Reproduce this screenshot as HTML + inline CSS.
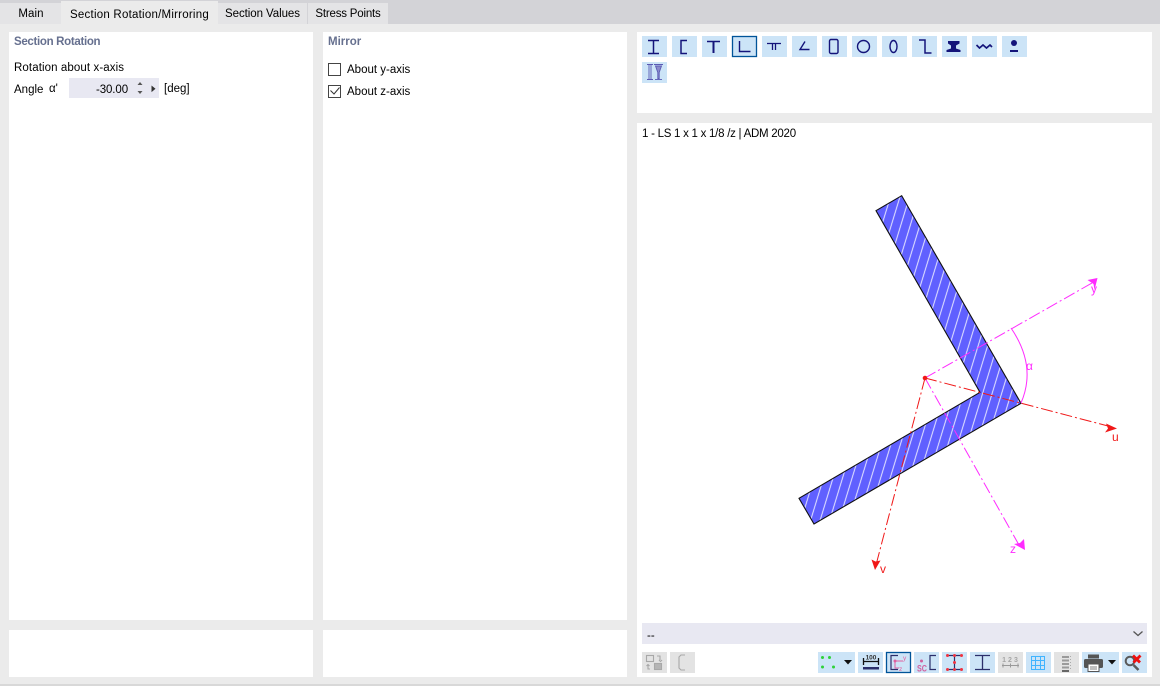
<!DOCTYPE html>
<html><head><meta charset="utf-8"><style>
html,body{margin:0;padding:0}
body{width:1160px;height:686px;background:#ebebeb;position:relative;overflow:hidden;font-family:"Liberation Sans",sans-serif;font-size:11.5px;color:#000}
.a{position:absolute}
.p{position:absolute;background:#fff}
.t{position:absolute;white-space:nowrap;line-height:14px}
.h{font-weight:bold;color:#66708f}
.tab{position:absolute;top:3px;height:21px;background:#e4e4e6;line-height:23px;text-align:center;white-space:nowrap}
svg{position:absolute;left:0;top:0}
</style></head><body>
<div class="a" style="left:0;top:0;width:1160px;height:24px;background:#d3d3d7"></div>
<div class="tab" style="left:0;width:62px;letter-spacing:.1px">Main</div>
<div class="tab" style="left:61px;top:1px;width:157px;height:23px;background:#ebebeb;line-height:28px;letter-spacing:.23px">Section Rotation/Mirroring</div>
<div class="tab" style="left:218px;width:89px;letter-spacing:-.07px">Section Values</div>
<div class="tab" style="left:308px;width:80px;letter-spacing:-.2px">Stress Points</div>

<div class="p" style="left:9px;top:32px;width:304px;height:588px"></div>
<div class="p" style="left:323px;top:32px;width:304px;height:588px"></div>
<div class="p" style="left:9px;top:630px;width:304px;height:47px"></div>
<div class="p" style="left:323px;top:630px;width:304px;height:47px"></div>
<div class="p" style="left:637px;top:32px;width:515px;height:81px"></div>
<div class="p" style="left:637px;top:123px;width:515px;height:554px"></div>
<div class="a" style="left:0;top:684px;width:1160px;height:2px;background:#d8d8d8"></div>

<div class="t h" style="left:14px;top:35px;letter-spacing:-.32px">Section Rotation</div>
<div class="t" style="left:14px;top:61px;letter-spacing:.1px">Rotation about x-axis</div>
<div class="t" style="left:14px;top:83px">Angle</div>
<div class="t" style="left:49px;top:82px">α'</div>
<div class="a" style="left:69px;top:78px;width:90px;height:20px;background:#e8e8f2"></div>
<div class="t" style="left:68px;top:83px;width:60px;text-align:right;letter-spacing:-.1px">-30.00</div>
<div class="t" style="left:164px;top:82px">[deg]</div>

<div class="t h" style="left:328px;top:35px">Mirror</div>
<div class="a" style="left:328px;top:63px;width:11px;height:11px;border:1px solid #444;background:#fff"></div>
<div class="t" style="left:347px;top:63px">About y-axis</div>
<div class="a" style="left:328px;top:85px;width:11px;height:11px;border:1px solid #444;background:#fff"></div>
<div class="t" style="left:347px;top:85px">About z-axis</div>

<div class="t" style="left:642px;top:127px;letter-spacing:-.26px">1 - LS 1 x 1 x 1/8 /z | ADM 2020</div>

<div class="a" style="left:642px;top:623px;width:505px;height:21px;background:#e8e8f2"></div>
<div class="t" style="left:647px;top:629px">--</div>

<svg width="1160" height="686" viewBox="0 0 1160 686" xmlns="http://www.w3.org/2000/svg">
<defs>
<pattern id="hatch" patternUnits="userSpaceOnUse" width="9.1" height="30" patternTransform="translate(894.65 198.67) rotate(17)">
<rect width="9.1" height="30" fill="#6060ff"/>
<line x1="4.55" y1="-1" x2="4.55" y2="31" stroke="#f4f4ff" stroke-width=".9"/>
</pattern>
</defs>
<!-- spinner -->
<path d="M137.500 85l2.500-3 2.500 3z M137.500 91l2.500 3 2.500-3z" fill="#555"/>
<path d="M151.500 85.500l4 3.300-4 3.300z" fill="#333"/>
<!-- checkbox tick -->
<path d="M330.500 90.500l3.500 3.500 5.500-6.500" fill="none" stroke="#333" stroke-width="1"/>
<!-- dropdown chevron -->
<path d="M1133.500 631.500l4.500 4 4.500-4" fill="none" stroke="#555" stroke-width="1.300"/>

<!-- top toolbar backgrounds -->
<g fill="#cce4f7">
<rect x="642" y="36" width="25" height="21"/><rect x="672" y="36" width="25" height="21"/><rect x="702" y="36" width="25" height="21"/>
<rect x="762" y="36" width="25" height="21"/><rect x="792" y="36" width="25" height="21"/><rect x="822" y="36" width="25" height="21"/>
<rect x="852" y="36" width="25" height="21"/><rect x="882" y="36" width="25" height="21"/><rect x="912" y="36" width="25" height="21"/>
<rect x="942" y="36" width="25" height="21"/><rect x="972" y="36" width="25" height="21"/><rect x="1002" y="36" width="25" height="21"/>
<rect x="642" y="62" width="25" height="21"/>
</g>
<rect x="732.500" y="36.500" width="24" height="20" fill="#cce4f7" stroke="#005499" stroke-width="1.300"/>
<g fill="none" stroke="#14147a" stroke-width="1.400">
<path d="M648 40.500h11M648 53.500h11M653.500 40.500v13" stroke-width="1.500"/>
<path d="M687 40.500h-6v13h6" stroke-width="1.500"/>
<path d="M707 41.500h13" stroke-width="1.500"/>
<path d="M713.500 41.500v11.500" stroke-width="2"/>
<path d="M739.500 41v10.500h11"/>
<path d="M767 43.500h14M772.500 43.500v6.500M775.500 43.500v6.500" stroke-width="1.300"/>
<path d="M805 41.500l-5 8h9.500"/>
<rect x="829.500" y="39.500" width="8.500" height="14" rx="1.500"/>
<circle cx="863.500" cy="46.500" r="6"/>
<ellipse cx="893.500" cy="46.500" rx="3.500" ry="6"/>
<path d="M919 40h6v13h6.500" stroke-width="1.500"/>
<path d="M976.500 45l3 3 3.500-3 3.500 3 3.500-3 2 2" stroke-width="1.700"/>
</g>
<path d="M948 41h11.500v2.500l-3.500 2v3l4.500 1.500v2h-14v-2l4.500-1.500v-3l-3-2z" fill="#14147a"/>
<circle cx="1014" cy="43" r="3" fill="#14147a"/><rect x="1010" y="50" width="8" height="2" fill="#14147a"/>
<g fill="none" stroke="#5a5ab4" stroke-width=".9">
<path d="M647 64.500h6M647 79.500h6M649 65v14M651 65v14"/>
<path d="M654 64.500h9M655.500 66h6l-2.300 6.500v6h-1.400v-6z" fill="#8a8acb"/>
<path d="M655 79.500h7"/>
</g>

<!-- section -->
<path d="M901.700 195.700L876 210.700L980 392.300L799 498.300L814 524L1021 403.300Z" fill="url(#hatch)" stroke="#111" stroke-width="1.100" stroke-linejoin="miter"/>

<!-- magenta axes -->
<g fill="none" stroke="#ff2bff" stroke-width="1">
<path d="M925 378L1092 283" stroke-dasharray="12 3 2 3"/>
<path d="M925 378L1019 545" stroke-dasharray="12 3 2 3"/>
<path d="M1011 328Q1037 366 1021 403"/>
</g>
<path d="M1097.500 278l-10 2 6 4 1 6z" fill="#ff2bff"/>
<path d="M1025 550l-1-11-4 4-6 1z" fill="#ff2bff"/>
<!-- red axes -->
<g fill="none" stroke="#f01818" stroke-width="1">
<path d="M925 378L1108 426" stroke-dasharray="12 3 2 3"/>
<path d="M925 378L876 565" stroke-dasharray="12 3 2 3"/>
</g>
<path d="M1117 428.500l-11-5 2 5-3 4z" fill="#f01818"/>
<path d="M875 570l-3.500-10.500 4 2 5-1z" fill="#f01818"/>
<circle cx="925" cy="378" r="2.300" fill="#f01818"/>
<text x="1091" y="293" font-family="Liberation Sans,sans-serif" font-size="12" fill="#ff2bff">y</text>
<text x="1010" y="553" font-family="Liberation Sans,sans-serif" font-size="12" fill="#ff2bff">z</text>
<text x="1026" y="370" font-family="Liberation Sans,sans-serif" font-size="12" fill="#ff2bff">α</text>
<text x="1112" y="441" font-family="Liberation Sans,sans-serif" font-size="12" fill="#f01818">u</text>
<text x="880" y="573" font-family="Liberation Sans,sans-serif" font-size="12" fill="#f01818">v</text>

<!-- bottom toolbar -->
<g fill="#e3e3e3">
<rect x="642" y="652" width="25" height="21"/><rect x="670" y="652" width="25" height="21"/>
<rect x="998" y="652" width="25" height="21"/><rect x="1054" y="652" width="25" height="21"/>
</g>
<g fill="#cce4f7">
<rect x="818" y="652" width="37" height="21"/><rect x="858" y="652" width="25" height="21"/>
<rect x="914" y="652" width="25" height="21"/><rect x="942" y="652" width="25" height="21"/><rect x="970" y="652" width="25" height="21"/>
<rect x="1026" y="652" width="25" height="21"/><rect x="1082" y="652" width="37" height="21"/><rect x="1122" y="652" width="25" height="21"/>
</g>
<rect x="886.500" y="652.500" width="24" height="20" fill="#cce4f7" stroke="#005499" stroke-width="1.300"/>

<!-- disabled 1,2 -->
<g fill="none" stroke="#a8a8a8" stroke-width="1.100">
<rect x="646.500" y="655.500" width="7" height="6"/>
<path d="M657 656h3v4M659 660l1.500 1.500 1.500-1.500M650 669h-2v-4M646.500 666l1.500-1.500 1.500 1.500"/>
<rect x="654.500" y="663.500" width="7" height="6" fill="#b5b5b5"/>
<path d="M685 655h-4l-2 2v11l2 2h4"/>
</g>
<!-- dots -->
<g fill="#2fd13a">
<circle cx="822.500" cy="657.500" r="1.500"/><circle cx="829.500" cy="657.500" r="1.500"/>
<circle cx="822.500" cy="667" r="1.500"/><circle cx="833.500" cy="667" r="1.500"/>
</g>
<path d="M844 660h8l-4 4.500z" fill="#111"/>
<!-- 100 dimension -->
<path d="M863 661.500h16M863.500 658v7M878.500 658v7" fill="none" stroke="#111" stroke-width="1.300"/>
<rect x="863" y="667" width="16" height="2.500" fill="#2b2f6b"/>
<text x="871" y="659.500" text-anchor="middle" font-family="Liberation Sans,sans-serif" font-size="6.500" font-weight="bold" fill="#333">100</text>
<!-- section with axes -->
<path d="M898 655.500h-7v14h7" fill="none" stroke="#2b2f6b" stroke-width="1.200"/>
<path d="M895 661v7h4M895 661h8" fill="none" stroke="#e0609f" stroke-width="1"/>
<circle cx="895" cy="661" r="1.500" fill="#e0609f"/>
<text x="903" y="660" font-family="Liberation Sans,sans-serif" font-size="6.500" fill="#e0609f">y</text>
<text x="899" y="671" font-family="Liberation Sans,sans-serif" font-size="6.500" fill="#e0609f">z</text>
<!-- SC -->
<path d="M936 655.500h-6v14h6" fill="none" stroke="#2b2f6b" stroke-width="1.200"/>
<circle cx="921.500" cy="661" r="1.500" fill="#d060a0"/>
<text x="917" y="671.500" font-family="Liberation Sans,sans-serif" font-size="9" font-weight="bold" fill="#d060a0" textLength="10" lengthAdjust="spacingAndGlyphs">SC</text>
<!-- I red -->
<path d="M947 655.500h15M947 669.500h15M954.500 655.500v14" fill="none" stroke="#2b2f6b" stroke-width="1.200"/>
<g fill="#ef3340"><circle cx="947.500" cy="655.500" r="1.500"/><circle cx="954.500" cy="655.500" r="1.500"/><circle cx="961.500" cy="655.500" r="1.500"/><circle cx="954.500" cy="662.500" r="1.500"/><circle cx="947.500" cy="669.500" r="1.500"/><circle cx="954.500" cy="669.500" r="1.500"/><circle cx="961.500" cy="669.500" r="1.500"/></g>
<!-- I -->
<path d="M975 655.500h15M975 669.500h15M982.500 655.500v14" fill="none" stroke="#2b2f6b" stroke-width="1.300"/>
<!-- 123 -->
<text x="1011" y="662" text-anchor="middle" font-family="Liberation Sans,sans-serif" font-size="7" font-weight="bold" fill="#a5a5a5" letter-spacing="2">123</text>
<path d="M1002 665.500h17M1003 663.500v4M1010.500 663.500v4M1018 663.500v4" fill="none" stroke="#999" stroke-width="1"/>
<!-- grid -->
<path d="M1031.500 656.500h13v13h-13zM1031.500 660.500h13M1031.500 665.500h13M1035.500 656.500v13M1040.500 656.500v13" fill="none" stroke="#40b4ff" stroke-width="1"/>
<!-- list disabled -->
<g fill="#9a9a9a">
<rect x="1062" y="656" width="7" height="2"/><rect x="1062" y="659.500" width="7" height="2"/><rect x="1062" y="663" width="7" height="2"/><rect x="1062" y="666.500" width="7" height="2"/><rect x="1062" y="670" width="7" height="2" fill="#666"/>
</g>
<path d="M1070.500 656v15" stroke="#aaa" stroke-dasharray="1 2"/>
<!-- printer -->
<rect x="1088" y="654.500" width="11" height="4" fill="#555"/>
<rect x="1084" y="659" width="19" height="9" rx="1.500" fill="#555"/>
<rect x="1088" y="664" width="11" height="7.500" fill="#fff" stroke="#555"/>
<path d="M1090 667h7M1090 669h7" stroke="#555" stroke-width=".8"/>
<path d="M1108 660h8l-4 4.500z" fill="#111"/>
<!-- search x -->
<circle cx="1130" cy="661" r="4.300" fill="none" stroke="#5a5a5a" stroke-width="2"/>
<path d="M1133.500 665l5 5" stroke="#5a5a5a" stroke-width="2.500"/>
<path d="M1133 655.500l7 7M1140.500 655.500l-7 7" stroke="#ee1111" stroke-width="2.800"/>
</svg>
</body></html>
